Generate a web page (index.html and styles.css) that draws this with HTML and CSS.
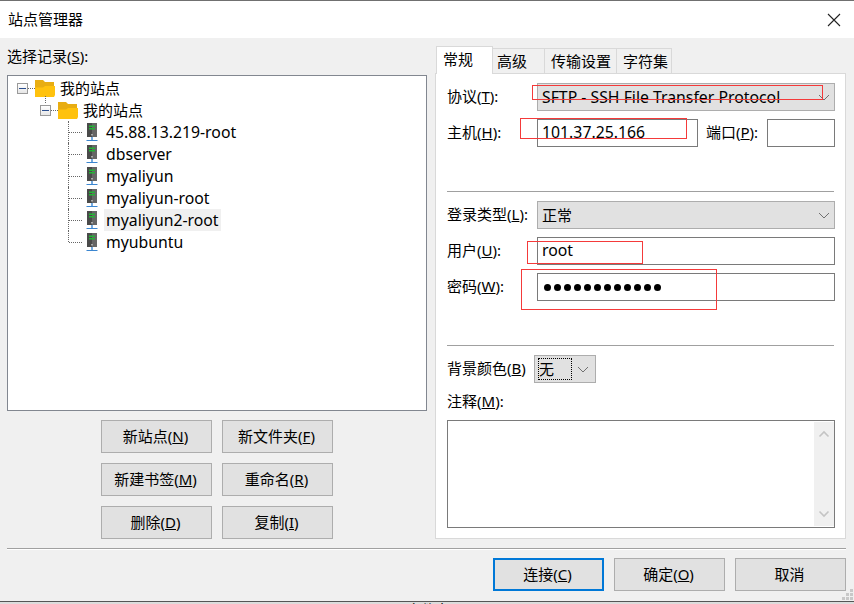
FILE: index.html
```html
<!DOCTYPE html>
<html lang="zh">
<head>
<meta charset="utf-8">
<title>站点管理器</title>
<link rel="stylesheet" href="styles.css">
</head>
<body>
<div class="window">
  <header class="titlebar">
    <span class="title">站点管理器</span>
    <svg class="close" width="14" height="14" viewBox="0 0 14 14"><path d="M1 1l12 12M13 1L1 13" stroke="#222" stroke-width="1.1" fill="none"/></svg>
  </header>
  <div class="content">
    <section class="left">
      <div class="tree-label">选择记录(<u>S</u>):</div>
      <div class="tree">
        <div class="row root">
          <span class="exp"></span><span class="dots"></span>
          <svg class="folder" width="20" height="18" viewBox="0 0 20 18"><path d="M0 0h8l2 2h9v12H0z" fill="#e8ad12"/><path d="M0 17V7.500h8l2-1.500h10v9l-1 2H0z" fill="#ffc20e"/></svg>
          <span class="name">我的站点</span>
        </div>
        <div class="row sub">
          <span class="exp"></span><span class="dots"></span>
          <svg class="folder" width="20" height="18" viewBox="0 0 20 18"><path d="M0 0h8l2 2h9v12H0z" fill="#e8ad12"/><path d="M0 17V7.500h8l2-1.500h10v9l-1 2H0z" fill="#ffc20e"/></svg>
          <span class="name">我的站点</span>
        </div>
        <div class="row leaf"><span class="conn"></span><svg class="server" width="12" height="19" viewBox="0 0 12 19"><use href="#srv"/></svg><span class="name lat">45.88.13.219-root</span></div>
        <div class="row leaf"><span class="conn"></span><svg class="server" width="12" height="19" viewBox="0 0 12 19"><use href="#srv"/></svg><span class="name lat">dbserver</span></div>
        <div class="row leaf"><span class="conn"></span><svg class="server" width="12" height="19" viewBox="0 0 12 19"><use href="#srv"/></svg><span class="name lat">myaliyun</span></div>
        <div class="row leaf"><span class="conn"></span><svg class="server" width="12" height="19" viewBox="0 0 12 19"><use href="#srv"/></svg><span class="name lat">myaliyun-root</span></div>
        <div class="row leaf"><span class="conn"></span><svg class="server" width="12" height="19" viewBox="0 0 12 19"><use href="#srv"/></svg><span class="name lat selected">myaliyun2-root</span></div>
        <div class="row leaf last"><span class="conn"></span><svg class="server" width="12" height="19" viewBox="0 0 12 19"><use href="#srv"/></svg><span class="name lat">myubuntu</span></div>
      </div>
      <div class="tree-buttons">
        <button class="btn">新站点(<u>N</u>)</button>
        <button class="btn">新文件夹(<u>F</u>)</button>
        <button class="btn">新建书签(<u>M</u>)</button>
        <button class="btn">重命名(<u>R</u>)</button>
        <button class="btn">删除(<u>D</u>)</button>
        <button class="btn">复制(<u>I</u>)</button>
      </div>
    </section>
    <section class="right">
      <div class="tabs">
        <span class="tab active">常规</span>
        <span class="tab t2">高级</span>
        <span class="tab t3">传输设置</span>
        <span class="tab t4">字符集</span>
      </div>
      <div class="panel">
        <div class="field">
          <label class="lbl">协议(<u>T</u>):</label>
          <div class="select grow"><span class="val lat">SFTP - SSH File Transfer Protocol</span><svg class="chev" width="12" height="7" viewBox="0 0 12 7"><path d="M1 1l5 5 5-5" stroke="#707070" fill="none"/></svg></div>
          <span class="mark m-proto"></span>
        </div>
        <div class="field">
          <label class="lbl">主机(<u>H</u>):</label>
          <div class="input host lat">101.37.25.166</div>
          <label class="port-lbl">端口(<u>P</u>):</label>
          <div class="input port"></div>
          <span class="mark m-host"></span>
        </div>
        <hr class="sep sep-a">
        <div class="field">
          <label class="lbl">登录类型(<u>L</u>):</label>
          <div class="select grow"><span class="val">正常</span><svg class="chev" width="12" height="7" viewBox="0 0 12 7"><path d="M1 1l5 5 5-5" stroke="#707070" fill="none"/></svg></div>
        </div>
        <div class="field">
          <label class="lbl">用户(<u>U</u>):</label>
          <div class="input grow lat">root</div>
          <span class="mark m-user"></span>
        </div>
        <div class="field">
          <label class="lbl">密码(<u>W</u>):</label>
          <div class="input grow dots-row"><i></i><i></i><i></i><i></i><i></i><i></i><i></i><i></i><i></i><i></i><i></i><i></i></div>
          <span class="mark m-pass"></span>
        </div>
        <hr class="sep sep-b">
        <div class="field color-field">
          <label class="color-lbl">背景颜色(<u>B</u>)</label>
          <div class="select color"><span class="focus">无</span><svg class="chev" width="12" height="7" viewBox="0 0 12 7"><path d="M1 1l5 5 5-5" stroke="#707070" fill="none"/></svg></div>
        </div>
        <div class="note-lbl">注释(<u>M</u>):</div>
        <div class="textarea">
          <div class="scroll">
            <svg width="12" height="8" viewBox="0 0 12 8"><path d="M1.500 6.500L6 2l4.500 4.500" stroke="#c4c4c4" stroke-width="1.600" fill="none"/></svg>
            <svg width="12" height="8" viewBox="0 0 12 8"><path d="M1.500 1.500L6 6l4.500-4.500" stroke="#c4c4c4" stroke-width="1.600" fill="none"/></svg>
          </div>
        </div>
      </div>
    </section>
  </div>
  <div class="rule"></div>
  <footer class="footer">
    <button class="btn wide primary">连接(<u>C</u>)</button>
    <button class="btn wide">确定(<u>O</u>)</button>
    <button class="btn wide">取消</button>
    <svg class="grip" width="12" height="12" viewBox="0 0 12 12"><path d="M8 0h3v3H8zM4 4h3v3H4zM8 4h3v3H8zM0 8h3v3H0zM4 8h3v3H4zM8 8h3v3H8z" fill="#c8c8c8"/></svg>
  </footer>
</div>
<div class="behind"><span>文件夹</span></div>
<svg class="defs" width="0" height="0"><defs><g id="srv"><path d="M1 0h10v14H1z" fill="#666"/><path d="M1 0h5v14H1z" fill="#4a4a4a"/><path d="M3 2.500h6v1.500H3zM3 5h6v1.500H3z" fill="#22b534"/><path d="M5 11h2v1.500H5z" fill="#aaa"/><path d="M5.300 14h1.400v3.500H5.300z" fill="#3b86d0"/><path d="M0.500 17h11v1H0.500z" fill="#3b86d0"/></g></defs></svg>
</body>
</html>
```
FILE: styles.css
```css
* { box-sizing: border-box; }
html, body { margin: 0; padding: 0; }
body {
  width: 854px;
  height: 604px;
  overflow: hidden;
  background: #f0f0f0;
  font-family: "Noto Sans", "Noto Sans CJK SC", sans-serif;
  font-size: 15px;
  color: #000;
}
.lat { font-size: 15.8px; }
.defs { position: absolute; }
.window {
  height: 602px;
  display: flex;
  flex-direction: column;
  border-top: 1px solid #707070;
  border-bottom: 1px solid #555;
  background: #f0f0f0;
}
.behind {
  height: 2px;
  overflow: hidden;
  background: #dcdcdc;
  padding-left: 407px;
  font-size: 14px;
  line-height: 16px;
  white-space: nowrap;
}
.titlebar {
  height: 37px;
  flex: none;
  background: #fff;
  display: flex;
  align-items: center;
  justify-content: space-between;
  padding: 0 13px 0 8px;
}
.title { line-height: 37px; }
.content {
  height: 510px;
  flex: none;
  display: flex;
  padding-left: 7px;
}
.left { width: 420px; flex: none; }
.tree-label { height: 37px; line-height: 37px; }
.tree {
  height: 336px;
  background: #fff;
  border: 1px solid #828790;
  padding-top: 1px;
}
.row {
  height: 22px;
  display: flex;
  align-items: center;
  white-space: nowrap;
}
.root { padding-left: 9px; }
.sub { padding-left: 32px; position: relative; }
.sub::before {
  content: "";
  position: absolute;
  left: 37px;
  top: -3px;
  height: 7px;
  border-left: 1px dotted #666;
}
.leaf { padding-left: 60px; }
.exp {
  width: 11px;
  height: 11px;
  flex: none;
  border: 1px solid #9a9a9a;
  background: linear-gradient(#fff, #e6e6e6);
  position: relative;
}
.exp::after {
  content: "";
  position: absolute;
  left: 1px;
  right: 1px;
  top: 4px;
  height: 1px;
  background: #2c4f8e;
}
.dots {
  width: 7px;
  flex: none;
  border-top: 1px dotted #666;
}
.folder { flex: none; margin-right: 5px; margin-top: 1px; }
.conn {
  width: 18px;
  height: 22px;
  flex: none;
  position: relative;
  border-left: 1px dotted #666;
}
.conn::after {
  content: "";
  position: absolute;
  left: 0;
  top: 11px;
  width: 13px;
  border-top: 1px dotted #666;
}
.last .conn { height: 11px; align-self: flex-start; }
.server { flex: none; margin-right: 8px; }
.name { padding: 0 2px; line-height: 22px; margin-left: -2px; }
.selected { background: #f0f0f0; }
.tree-buttons {
  display: grid;
  grid-template-columns: 111px 111px;
  grid-auto-rows: 33px;
  gap: 10px;
  justify-content: start;
  margin: 9px 0 0 94px;
}
.btn {
  background: #e1e1e1;
  border: 1px solid #adadad;
  font: inherit;
  color: #000;
  padding: 0 2px 2px 0;
  height: 33px;
}
.right { width: 411px; flex: none; margin-left: 8px; padding-top: 8px; }
.tabs {
  display: flex;
  height: 27px;
  align-items: flex-end;
  position: relative;
  z-index: 1;
  padding-left: 1px;
}
.tab {
  height: 25px;
  line-height: 25px;
  background: #f0f0f0;
  border: 1px solid #d9d9d9;
  border-bottom: 0;
  border-left: 0;
  flex: none;
}
.active {
  width: 57px;
  height: 28px;
  margin-bottom: -1px;
  background: #fff;
  border-left: 1px solid #d9d9d9;
  padding-left: 6px;
  line-height: 25px;
}
.t2 { width: 52px; padding-left: 4px; }
.t3 { width: 72px; padding-left: 6px; }
.t4 { width: 55px; padding-left: 6px; }
.panel {
  height: 466px;
  background: #fff;
  border: 1px solid #d9d9d9;
  padding: 9px 10px 0 11px;
}
.field {
  height: 28px;
  display: flex;
  align-items: center;
  margin-bottom: 8px;
  position: relative;
}
.lbl { width: 90px; flex: none; padding-bottom: 3px; }
.grow { flex: 1; }
.select {
  height: 28px;
  background: #e1e1e1;
  border: 1px solid #adadad;
  display: flex;
  align-items: center;
  justify-content: space-between;
  padding: 0 4px 0 4px;
}
.val { padding-bottom: 1px; }
.input {
  height: 28px;
  background: #fff;
  border: 1px solid #7a7a7a;
  line-height: 24px;
  padding-left: 4px;
}
.host { width: 161px; flex: none; }
.port-lbl { margin-left: 8px; width: 61px; flex: none; padding-bottom: 3px; }
.port { width: 68px; flex: none; }
.sep { border: 0; border-top: 1px solid #a0a0a0; margin: 0; width: 387px; }
.sep-a { margin-top: 44px; margin-bottom: 9px; }
.sep-b { margin-top: 44px; margin-bottom: 9px; }
.dots-row { display: flex; align-items: center; gap: 3px; padding-left: 6px; }
.dots-row i { width: 7px; height: 7px; border-radius: 50%; background: #000; flex: none; }
.mark { position: absolute; border: 1px solid #f43a3a; pointer-events: none; }
.m-proto { left: 85px; top: 2px; width: 291px; height: 15px; }
.m-host { left: 73px; top: -1px; width: 167px; height: 21px; }
.m-user { left: 80px; top: 4px; width: 116px; height: 23px; }
.m-pass { left: 74px; top: -4px; width: 196px; height: 41px; }
.color-field { margin-bottom: 0; }
.color-lbl { width: 87px; flex: none; padding-bottom: 4px; }
.color {
  width: 62px;
  flex: none;
  padding: 0 6px 0 3px;
}
.focus {
  width: 34px;
  height: 22px;
  line-height: 20px;
  border: 1px dotted #000;
  flex: none;
}
.note-lbl { height: 37px; line-height: 36px; }
.textarea {
  width: 388px;
  height: 108px;
  background: #fff;
  border: 1px solid #7a7a7a;
  display: flex;
  justify-content: flex-end;
  padding: 1px 0;
}
.scroll {
  width: 20px;
  background: #f0f0f0;
  display: flex;
  flex-direction: column;
  justify-content: space-between;
  align-items: center;
  padding: 8px 0;
}
.rule {
  height: 2px;
  flex: none;
  margin-left: 7px;
  border-top: 1px solid #a0a0a0;
  border-bottom: 1px solid #fff;
  margin-right: 8px;
}
.footer {
  flex: 1;
  display: flex;
  justify-content: flex-end;
  align-items: flex-start;
  gap: 10px;
  padding: 8px 8px 0 0;
  position: relative;
}
.wide { width: 111px; height: 33px; }
.primary { border: 2px solid #0078d7; }
.grip { position: absolute; right: 0; bottom: 0; }
```
